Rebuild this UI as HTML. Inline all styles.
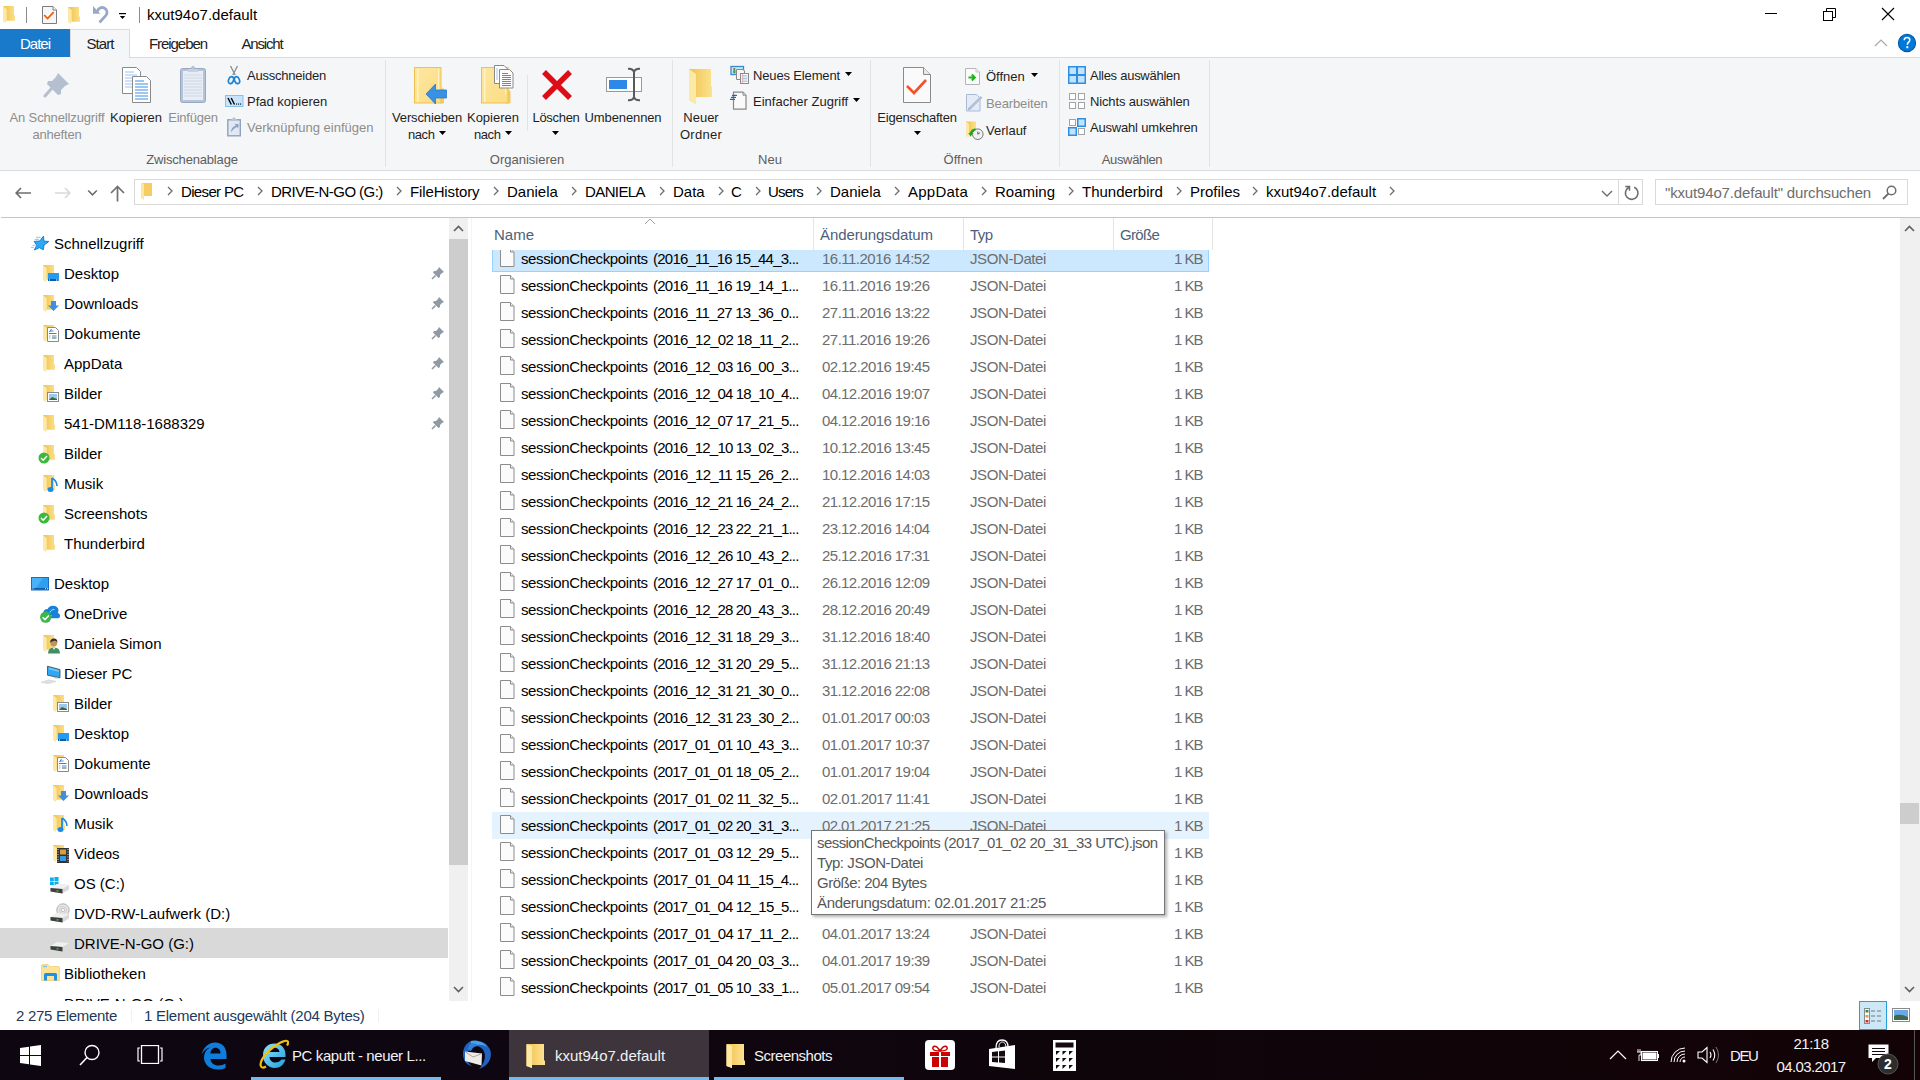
<!DOCTYPE html><html><head><meta charset="utf-8"><style>
html,body{margin:0;padding:0;width:1920px;height:1080px;overflow:hidden;background:#fff;position:relative}
.a{position:absolute;display:block}
.t{position:absolute;white-space:nowrap;font-family:"Liberation Sans",sans-serif;font-size:15px;line-height:20px;height:20px;color:#000}
.rb{font-size:13px;color:#1e1e1e}
.dis{color:#8d8d8d}
.g{font-size:13px;color:#5d5d5d}
.ad{color:#000}
.sr{color:#6d6d6d}
.nv{color:#000}
.fn{color:#000}
.dt{color:#6d6d6d}
.hd{color:#4c607a}
.tt{color:#575757}
.st{color:#1e395b}
.tb{color:#f2f2f2}
</style></head><body>
<svg width="0" height="0" style="position:absolute"><defs><linearGradient id="gfold" x1="0" x2="1"><stop offset="0" stop-color="#efc24c"/><stop offset="1" stop-color="#fbe08a"/></linearGradient></defs></svg>
<svg class="a" style="left:3px;top:6px;" width="13" height="18" viewBox="0 0 13 18"><path d="M0 0H11V9.5H12V14.8H0Z" fill="url(#gfold)"/><path d="M0 0L3.7 3.2V14.8L2.5 17L0 15Z" fill="#fde8a6"/></svg>
<div class="a" style="left:26px;top:7px;width:1px;height:16px;background:#8a8a8a"></div>
<svg class="a" style="left:42px;top:6px;" width="15" height="18" viewBox="0 0 15 18"><path d="M0.5 0.5h10.5l3.5 3.5v13.5h-14z" fill="#f5f7f9" stroke="#7d7d7d"/><path d="M11 0.5v3.5h3.5" fill="#fff" stroke="#7d7d7d"/><path d="M2.2 9 L5.5 12.5 L11.7 6.2" fill="none" stroke="#f05a00" stroke-width="1.7"/></svg>
<svg class="a" style="left:68px;top:7px;" width="13" height="18" viewBox="0 0 13 18"><path d="M0 0H11V9.5H12V14.8H0Z" fill="url(#gfold)"/><path d="M0 0L3.7 3.2V14.8L2.5 17L0 15Z" fill="#fde8a6"/></svg>
<svg class="a" style="left:92px;top:5px;" width="18" height="20" viewBox="0 0 18 20"><path d="M1 1 L1 8.8 L8.3 8.8 Z" fill="#97a9c6"/><path d="M5.5 6.5 A4.8 4.8 0 1 1 13.9 10.4 L7.5 17.5" fill="none" stroke="#97a9c6" stroke-width="2.8"/></svg>
<svg class="a" style="left:119px;top:13px;" width="7" height="7" viewBox="0 0 7 7"><rect x="0" y="0" width="7" height="1.2" fill="#000"/><path d="M0.8 3h5.4l-2.7 3z" fill="#000"/></svg>
<div class="a" style="left:139px;top:7px;width:1px;height:16px;background:#8a8a8a"></div>
<div class="t " style="left:147px;top:5px;letter-spacing:normal;color:#000">kxut94o7.default</div>
<div class="a" style="left:1765px;top:13px;width:12px;height:1px;background:#000"></div>
<svg class="a" style="left:1822px;top:8px;" width="14" height="14" viewBox="0 0 14 14"><rect x="1.5" y="3.5" width="9" height="9" fill="none" stroke="#000"/><path d="M4.5 3.5v-3h9v9h-3" fill="none" stroke="#000"/></svg>
<svg class="a" style="left:1881px;top:7px;" width="14" height="14" viewBox="0 0 14 14"><path d="M1 1L13 13M13 1L1 13" stroke="#000" stroke-width="1.1"/></svg>
<div class="a" style="left:0px;top:29px;width:70px;height:28px;background:#1979ca"></div>
<div class="t " style="left:0px;top:34px;width:70px;text-align:center;letter-spacing:-1.006px;color:#fff">Datei</div>
<div class="a" style="left:130px;top:57px;width:1790px;height:1px;background:#dadbdc"></div>
<div class="a" style="left:70px;top:29px;width:60px;height:29px;background:#f5f6f7;border:1px solid #dadbdc;border-bottom:none;box-sizing:border-box"></div>
<div class="t " style="left:70px;top:34px;width:60px;text-align:center;letter-spacing:-0.938px;color:#222">Start</div>
<div class="t " style="left:128px;top:34px;width:100px;text-align:center;letter-spacing:-1.061px;color:#222">Freigeben</div>
<div class="t " style="left:212px;top:34px;width:100px;text-align:center;letter-spacing:-1.172px;color:#222">Ansicht</div>
<svg class="a" style="left:1874px;top:39px;" width="14" height="9" viewBox="0 0 14 9"><path d="M1 7L7 1L13 7" fill="none" stroke="#a8a8a8" stroke-width="1.2"/></svg>
<svg class="a" style="left:1897px;top:33px;" width="20" height="20" viewBox="0 0 20 20"><circle cx="10" cy="10" r="8.6" fill="#0078d7" stroke="#005aa8" stroke-width="1.1"/><path d="M7.2 7.3 C7.2 5.4 8.4 4.5 10 4.5 C11.7 4.5 12.8 5.6 12.8 7 C12.8 9 10.3 9.3 10.3 11.8" fill="none" stroke="#fff" stroke-width="1.5"/><rect x="9.3" y="13.2" width="2" height="2" fill="#fff"/></svg>
<div class="a" style="left:0px;top:58px;width:1920px;height:112px;background:#f5f6f7"></div>
<div class="a" style="left:0px;top:170px;width:1920px;height:1px;background:#dadbdc"></div>
<div class="a" style="left:385px;top:60px;width:1px;height:107px;background:#e2e3e4"></div>
<div class="a" style="left:672px;top:60px;width:1px;height:107px;background:#e2e3e4"></div>
<div class="a" style="left:870px;top:60px;width:1px;height:107px;background:#e2e3e4"></div>
<div class="a" style="left:1059px;top:60px;width:1px;height:107px;background:#e2e3e4"></div>
<div class="a" style="left:1209px;top:60px;width:1px;height:107px;background:#e2e3e4"></div>
<div class="a" style="left:527px;top:75px;width:1px;height:56px;background:#e2e3e4"></div>
<div class="t g" style="left:112px;top:150px;width:160px;text-align:center;letter-spacing:-0.175px;">Zwischenablage</div>
<div class="t g" style="left:447px;top:150px;width:160px;text-align:center;letter-spacing:normal;">Organisieren</div>
<div class="t g" style="left:730px;top:150px;width:80px;text-align:center;letter-spacing:normal;">Neu</div>
<div class="t g" style="left:913px;top:150px;width:100px;text-align:center;letter-spacing:normal;">Öffnen</div>
<div class="t g" style="left:1072px;top:150px;width:120px;text-align:center;letter-spacing:-0.345px;">Auswählen</div>
<svg class="a" style="left:43px;top:71px;" width="28" height="28" viewBox="0 0 28 28"><path d="M15 2 L26 13 L22 15 L18 19 L18 23 L15 24 L4 13 L5 10 L9 10 L13 6 Z" fill="#b4c0d0"/><path d="M9 17 L2 25" stroke="#b4c0d0" stroke-width="3" stroke-linecap="round"/></svg>
<div class="t rb dis" style="left:-3px;top:108px;width:120px;text-align:center;letter-spacing:-0.137px;">An Schnellzugriff</div>
<div class="t rb dis" style="left:-3px;top:125px;width:120px;text-align:center;letter-spacing:-0.201px;">anheften</div>
<svg class="a" style="left:121px;top:66px;" width="32" height="38" viewBox="0 0 32 38"><path d="M1.5 1.5h14l4 4v22h-18z" fill="#fff" stroke="#8a8a8a"/><g stroke="#9cc3f0" stroke-width="1"><path d="M4 6h9M4 9h12M4 12h12M4 15h12M4 18h12M4 21h12"/></g><path d="M11.5 10.5h14l4 4v22h-18z" fill="#fff" stroke="#8a8a8a"/><g stroke="#3d8fe8" stroke-width="1.2"><path d="M14 15h9M14 18h13M14 21h13M14 24h13M14 27h13M14 30h13M14 33h13"/></g></svg>
<div class="t rb" style="left:96px;top:108px;width:80px;text-align:center;letter-spacing:normal;">Kopieren</div>
<svg class="a" style="left:179px;top:65px;" width="28" height="39" viewBox="0 0 28 39"><rect x="1.5" y="3.5" width="25" height="34" rx="2" fill="#b6c2d6" stroke="#98a9c4"/><rect x="4" y="6" width="20" height="29" fill="#e9eef6"/><g stroke="#ccd6e4"><path d="M5 10h18M5 13h18M5 16h18M5 19h18M5 22h18M5 25h18M5 28h18M5 31h18"/></g><path d="M9 4h10v3h-10z" fill="#c7d1e0"/><circle cx="14" cy="2.5" r="1.8" fill="#b6c2d6"/></svg>
<div class="t rb dis" style="left:158px;top:108px;width:70px;text-align:center;letter-spacing:-0.229px;">Einfügen</div>
<svg class="a" style="left:226px;top:65px;" width="16" height="20" viewBox="0 0 16 20"><path d="M4.5 1 L9.2 10 M11.5 1 L6.8 10" stroke="#8a8a8a" stroke-width="1.3"/><ellipse cx="5" cy="15.2" rx="2.4" ry="3.6" transform="rotate(22 5 15.2)" fill="none" stroke="#1a84d8" stroke-width="1.7"/><ellipse cx="11" cy="15.2" rx="2.4" ry="3.6" transform="rotate(-22 11 15.2)" fill="none" stroke="#1a84d8" stroke-width="1.7"/></svg>
<div class="t rb" style="left:247px;top:66px;letter-spacing:-0.223px;">Ausschneiden</div>
<svg class="a" style="left:225px;top:95px;" width="19" height="13" viewBox="0 0 19 13"><rect x="0.5" y="0.5" width="17.5" height="11" fill="#c8e4fa" stroke="#86c0ec"/><path d="M3 3 L6.3 9.5 M6.2 3 L9.5 9.5" stroke="#000" stroke-width="1.4"/><rect x="11" y="8.5" width="1.1" height="1.1" fill="#000"/><rect x="13" y="8.5" width="1.1" height="1.1" fill="#000"/><rect x="15" y="8.5" width="1.1" height="1.1" fill="#000"/></svg>
<div class="t rb" style="left:247px;top:92px;letter-spacing:normal;">Pfad kopieren</div>
<svg class="a" style="left:227px;top:116px;" width="15" height="21" viewBox="0 0 15 21"><rect x="0.8" y="3.8" width="12.5" height="16" fill="#e1e8f2" stroke="#8fa2c0" stroke-width="1.4"/><path d="M3.5 4.5 L7 1 L10.5 4.5 Z" fill="#b7c4d8"/><path d="M4 16.5 Q4 11 9 9.6 L7.6 7.8 L11.8 8.2 L11 12.4 L10 10.9 Q6.5 12 4 16.5 Z" fill="#8ba1c2"/></svg>
<div class="t rb dis" style="left:247px;top:118px;letter-spacing:normal;">Verknüpfung einfügen</div>
<svg class="a" style="left:414px;top:67px;" width="31" height="37" viewBox="0 0 31 37"><defs><linearGradient id="fb414" x1="0" y1="0" x2="1" y2="1"><stop offset="0" stop-color="#fde7a0"/><stop offset="1" stop-color="#fbdc84"/></linearGradient></defs><rect x="27" y="22" width="2.5" height="14" fill="#f6d264" stroke="#eec24c" stroke-width="0.8"/><rect x="0.5" y="0.5" width="26.5" height="35.5" fill="url(#fb414)" stroke="#eec24c"/><rect x="3" y="2" width="1.5" height="33" fill="#fff2c4"/><rect x="24" y="2" width="1" height="26" fill="#fff2c4"/></svg>
<svg class="a" style="left:425px;top:83px;" width="22" height="22" viewBox="0 0 22 22"><path d="M1 11 L10.5 1 V7 H21.5 V15 H10.5 V21 Z" fill="#3a90e2" stroke="#2a78cc" stroke-width="0.8"/></svg>
<div class="t rb" style="left:382px;top:108px;width:90px;text-align:center;letter-spacing:-0.142px;">Verschieben</div>
<div class="t rb" style="left:408px;top:125px;letter-spacing:-0.426px;">nach</div>
<svg class="a" style="left:439px;top:131px;" width="7" height="4" viewBox="0 0 7 4"><path d="M0 0h7l-3.5 4z" fill="#000"/></svg>
<svg class="a" style="left:481px;top:67px;" width="31" height="37" viewBox="0 0 31 37"><defs><linearGradient id="fb481" x1="0" y1="0" x2="1" y2="1"><stop offset="0" stop-color="#fde7a0"/><stop offset="1" stop-color="#fbdc84"/></linearGradient></defs><path d="M24.5 36 V24.5 Q26.8 21 29 24.5 V36 Z" fill="#f6d264" stroke="#eec24c" stroke-width="0.8"/><rect x="0.5" y="0.5" width="26.5" height="35.5" fill="url(#fb481)" stroke="#eec24c"/><rect x="3" y="2" width="1.5" height="33" fill="#fff2c4"/><rect x="24" y="2" width="1" height="26" fill="#fff2c4"/></svg>
<svg class="a" style="left:493px;top:64px;" width="22" height="26" viewBox="0 0 22 26"><path d="M1.5 1.5h9.5l3 3v15h-12.5z" fill="#fff" stroke="#8a8a8a"/><g stroke="#9cc3f0"><path d="M3 5h2M3 7h2M3 9h2M3 11h2M3 13h2M3 15h2"/></g><path d="M6.5 5.5h10l3.5 3.5v15h-13.5z" fill="#fff" stroke="#8a8a8a"/><g stroke="#3d8fe8" stroke-width="1.1"><path d="M9 9.5h6M9 11.5h9M9 13.5h9M9 15.5h9M9 17.5h9M9 19.5h9M9 21.5h9"/></g></svg>
<div class="t rb" style="left:453px;top:108px;width:80px;text-align:center;letter-spacing:normal;">Kopieren</div>
<div class="t rb" style="left:474px;top:125px;letter-spacing:-0.426px;">nach</div>
<svg class="a" style="left:505px;top:131px;" width="7" height="4" viewBox="0 0 7 4"><path d="M0 0h7l-3.5 4z" fill="#000"/></svg>
<svg class="a" style="left:540px;top:68px;" width="34" height="34" viewBox="0 0 34 34"><path d="M4 4 L30 30 M30 4 L4 30" stroke="#dc0d17" stroke-width="5.5" stroke-linecap="butt"/></svg>
<div class="t rb" style="left:521px;top:108px;width:70px;text-align:center;letter-spacing:-0.308px;">Löschen</div>
<svg class="a" style="left:552px;top:131px;" width="7" height="4" viewBox="0 0 7 4"><path d="M0 0h7l-3.5 4z" fill="#000"/></svg>
<svg class="a" style="left:605px;top:67px;" width="38" height="35" viewBox="0 0 38 35"><rect x="1.5" y="10.5" width="35" height="14" fill="#fff" stroke="#9a9a9a"/><rect x="4" y="13" width="18" height="9" fill="#2d89e5"/><path d="M23 1.8 Q28 1.5 29 5 Q30 1.5 35 1.8 M29 5 V30 M23 33.2 Q28 33.5 29 30 Q30 33.5 35 33.2" fill="none" stroke="#5a5a5a" stroke-width="2"/></svg>
<div class="t rb" style="left:578px;top:108px;width:90px;text-align:center;letter-spacing:-0.106px;">Umbenennen</div>
<svg class="a" style="left:688px;top:68px;" width="26" height="37" viewBox="0 0 26 37"><defs><linearGradient id="nfo" x1="0" x2="1"><stop offset="0" stop-color="#f1c24e"/><stop offset="1" stop-color="#fbe28f"/></linearGradient></defs><path d="M1 1 H23 V18 L24 19 V29 H8 V36 L1 32 Z" fill="url(#nfo)"/><path d="M1 1 L8 6 V36 L1 32 Z" fill="#fde9a6"/></svg>
<div class="t rb" style="left:671px;top:108px;width:60px;text-align:center;letter-spacing:normal;">Neuer</div>
<div class="t rb" style="left:671px;top:125px;width:60px;text-align:center;letter-spacing:0.255px;">Ordner</div>
<svg class="a" style="left:730px;top:65px;" width="20" height="20" viewBox="0 0 20 20"><rect x="1" y="1.5" width="12.5" height="8" fill="#c9e6fb" stroke="#3a8ac6" stroke-width="1.3"/><circle cx="4.3" cy="4" r="1.1" fill="#8a6040"/><rect x="3.2" y="5.2" width="2.3" height="3" fill="#3a9a5a"/><path d="M6.5 4.5 h6.5 l1.5 1.5 v8.5 h-8z" fill="#f4f4f4" stroke="#8a8a8a"/><rect x="10.5" y="8.5" width="8" height="10" fill="#fff" stroke="#8a8a8a"/><path d="M11.5 10.5h6M11.5 12h6M11.5 13.5h6M11.5 15h6M11.5 16.5h6" stroke="#a9cdf0"/><path d="M12.7 9v9" stroke="#f0a8a8"/></svg>
<div class="t rb" style="left:753px;top:66px;letter-spacing:-0.145px;">Neues Element</div>
<svg class="a" style="left:845px;top:72px;" width="7" height="4" viewBox="0 0 7 4"><path d="M0 0h7l-3.5 4z" fill="#000"/></svg>
<svg class="a" style="left:729px;top:91px;" width="20" height="20" viewBox="0 0 20 20"><path d="M4.5 1.2 h9.5 l3 3 v14 h-12.5 z" fill="#fafafa" stroke="#888" stroke-width="1.2"/><path d="M14 1.2 v3 h3" fill="#eee" stroke="#888" stroke-width="1"/><path d="M3.5 4.4 h4 M2.5 6.4 h4 M1.5 8.4 h4" stroke="#1e63b8" stroke-width="1.1" stroke-linecap="round"/></svg>
<div class="t rb" style="left:753px;top:92px;letter-spacing:normal;">Einfacher Zugriff</div>
<svg class="a" style="left:853px;top:98px;" width="7" height="4" viewBox="0 0 7 4"><path d="M0 0h7l-3.5 4z" fill="#000"/></svg>
<svg class="a" style="left:902px;top:66px;" width="30" height="38" viewBox="0 0 30 38"><path d="M1.5 1.5h20l7 7v28h-27z" fill="#fafafa" stroke="#8a8a8a"/><path d="M21.5 1.5v7h7" fill="#e8e8e8" stroke="#8a8a8a"/><path d="M5 20 L12 27 L24 14" fill="none" stroke="#f0532a" stroke-width="2.6"/></svg>
<div class="t rb" style="left:867px;top:108px;width:100px;text-align:center;letter-spacing:-0.239px;">Eigenschaften</div>
<svg class="a" style="left:914px;top:131px;" width="7" height="4" viewBox="0 0 7 4"><path d="M0 0h7l-3.5 4z" fill="#000"/></svg>
<svg class="a" style="left:965px;top:68px;" width="16" height="18" viewBox="0 0 16 18"><path d="M0.5 0.5h10.5l3.5 3.5v12.5h-14z" fill="#fbfbfb" stroke="#b5b5b5"/><path d="M11 0.5v3.5h3.5" fill="#eee" stroke="#c5c5c5"/><path d="M3.5 9.5 H9.5 M6.8 6.5 L9.8 9.5 L6.8 12.5" fill="none" stroke="#1fb21f" stroke-width="2"/></svg>
<div class="t rb" style="left:986px;top:67px;letter-spacing:normal;">Öffnen</div>
<svg class="a" style="left:1031px;top:73px;" width="7" height="4" viewBox="0 0 7 4"><path d="M0 0h7l-3.5 4z" fill="#000"/></svg>
<svg class="a" style="left:966px;top:94px;" width="18" height="18" viewBox="0 0 18 18"><path d="M0.5 0.5h10l3.5 3.5v13h-13.5z" fill="#e3ebf7" stroke="#a9bad4"/><path d="M3.2 15 L15.5 2.8" stroke="#b3c1d8" stroke-width="2.6"/><path d="M2.5 16 L3.4 14" stroke="#8898b0" stroke-width="1"/></svg>
<div class="t rb dis" style="left:986px;top:94px;letter-spacing:-0.119px;">Bearbeiten</div>
<svg class="a" style="left:965px;top:121px;" width="20" height="20" viewBox="0 0 20 20"><path d="M1 0.5H11V13H1Z" fill="url(#gfold)"/><path d="M1 0.5L4 3V16.5L1 15Z" fill="#fde8a6"/><circle cx="12.8" cy="13.2" r="5.3" fill="#eef0f1" stroke="#6a6a6a" stroke-width="0.9"/><path d="M12.8 10.5 V13.2 L15 11.8" fill="none" stroke="#444" stroke-width="0.8"/><path d="M5.6 13 Q6.5 9 10.5 8.3" fill="none" stroke="#1fa51f" stroke-width="2.2"/><path d="M3.3 12 H8 L5.6 15.8 Z" fill="#1fa51f"/></svg>
<div class="t rb" style="left:986px;top:121px;letter-spacing:normal;">Verlauf</div>
<svg class="a" style="left:1067px;top:65px;" width="20" height="20" viewBox="0 0 20 20"><rect x="1" y="1" width="18" height="18" fill="#2b8fe6"/><rect x="2.5" y="2.5" width="6.5" height="6.5" fill="#c3e2fb"/><rect x="11" y="2.5" width="6.5" height="6.5" fill="#c3e2fb"/><rect x="2.5" y="11" width="6.5" height="6.5" fill="#c3e2fb"/><rect x="11" y="11" width="6.5" height="6.5" fill="#c3e2fb"/></svg>
<div class="t rb" style="left:1090px;top:66px;letter-spacing:-0.264px;">Alles auswählen</div>
<svg class="a" style="left:1068px;top:92px;" width="18" height="18" viewBox="0 0 18 18"><g fill="#fff" stroke="#a3a3a3"><rect x="1.5" y="1.5" width="6" height="6"/><rect x="10.5" y="1.5" width="6" height="6"/><rect x="1.5" y="10.5" width="6" height="6"/><rect x="10.5" y="10.5" width="6" height="6"/></g></svg>
<div class="t rb" style="left:1090px;top:92px;letter-spacing:-0.143px;">Nichts auswählen</div>
<svg class="a" style="left:1067px;top:117px;" width="20" height="20" viewBox="0 0 20 20"><g fill="#fff" stroke="#a3a3a3"><rect x="2.5" y="2.5" width="6" height="6"/><rect x="11.5" y="11.5" width="6" height="6"/></g><rect x="10" y="1" width="9" height="9" fill="#2b8fe6"/><rect x="11.5" y="2.5" width="6" height="6" fill="#c3e2fb"/><rect x="1" y="10" width="9" height="9" fill="#2b8fe6"/><rect x="2.5" y="11.5" width="6" height="6" fill="#c3e2fb"/></svg>
<div class="t rb" style="left:1090px;top:118px;letter-spacing:-0.191px;">Auswahl umkehren</div>
<svg class="a" style="left:15px;top:187px;" width="17" height="12" viewBox="0 0 17 12"><path d="M6 1 L1.2 6 L6 11 M1.2 6 H16" fill="none" stroke="#6d6d6d" stroke-width="1.7"/></svg>
<svg class="a" style="left:54px;top:187px;" width="17" height="12" viewBox="0 0 17 12"><path d="M11 1 L15.8 6 L11 11 M1 6 H15.8" fill="none" stroke="#d9d9d9" stroke-width="1.7"/></svg>
<svg class="a" style="left:87px;top:189px;" width="11" height="8" viewBox="0 0 11 8"><path d="M1.2 1.5 L5.5 5.8 L9.8 1.5" fill="none" stroke="#6d6d6d" stroke-width="1.6"/></svg>
<svg class="a" style="left:110px;top:185px;" width="16" height="17" viewBox="0 0 16 17"><path d="M1 8 L7.5 1.5 L14 8 M7.5 1.5 V16.5" fill="none" stroke="#707070" stroke-width="1.7"/></svg>
<div class="a" style="left:134px;top:179px;width:1509px;height:26px;border:1px solid #d9d9d9;box-sizing:border-box;background:#fff"></div>
<div class="a" style="left:1618px;top:180px;width:1px;height:24px;background:#d9d9d9"></div>
<svg class="a" style="left:140px;top:182px;" width="13" height="19" viewBox="0 0 13 19"><path d="M2 1 H12 V14 H3z" fill="#f5cd62"/><path d="M1 1 L4 2 V18 L1 16 Z" fill="#fde7a2"/></svg>
<svg class="a" style="left:167px;top:186px;" width="7" height="10" viewBox="0 0 7 10"><path d="M1 1 L5 5 L1 9" fill="none" stroke="#6d6d6d" stroke-width="1.3"/></svg>
<div class="t ad" style="left:181px;top:182px;letter-spacing:-0.651px;">Dieser PC</div>
<svg class="a" style="left:257px;top:186px;" width="7" height="10" viewBox="0 0 7 10"><path d="M1 1 L5 5 L1 9" fill="none" stroke="#6d6d6d" stroke-width="1.3"/></svg>
<div class="t ad" style="left:271px;top:182px;letter-spacing:-0.550px;">DRIVE-N-GO (G:)</div>
<svg class="a" style="left:396px;top:186px;" width="7" height="10" viewBox="0 0 7 10"><path d="M1 1 L5 5 L1 9" fill="none" stroke="#6d6d6d" stroke-width="1.3"/></svg>
<div class="t ad" style="left:410px;top:182px;letter-spacing:-0.131px;">FileHistory</div>
<svg class="a" style="left:493px;top:186px;" width="7" height="10" viewBox="0 0 7 10"><path d="M1 1 L5 5 L1 9" fill="none" stroke="#6d6d6d" stroke-width="1.3"/></svg>
<div class="t ad" style="left:507px;top:182px;letter-spacing:normal;">Daniela</div>
<svg class="a" style="left:571px;top:186px;" width="7" height="10" viewBox="0 0 7 10"><path d="M1 1 L5 5 L1 9" fill="none" stroke="#6d6d6d" stroke-width="1.3"/></svg>
<div class="t ad" style="left:585px;top:182px;letter-spacing:-0.600px;">DANIELA</div>
<svg class="a" style="left:659px;top:186px;" width="7" height="10" viewBox="0 0 7 10"><path d="M1 1 L5 5 L1 9" fill="none" stroke="#6d6d6d" stroke-width="1.3"/></svg>
<div class="t ad" style="left:673px;top:182px;letter-spacing:normal;">Data</div>
<svg class="a" style="left:718px;top:186px;" width="7" height="10" viewBox="0 0 7 10"><path d="M1 1 L5 5 L1 9" fill="none" stroke="#6d6d6d" stroke-width="1.3"/></svg>
<div class="t ad" style="left:731px;top:182px;letter-spacing:-1.344px;">C</div>
<svg class="a" style="left:755px;top:186px;" width="7" height="10" viewBox="0 0 7 10"><path d="M1 1 L5 5 L1 9" fill="none" stroke="#6d6d6d" stroke-width="1.3"/></svg>
<div class="t ad" style="left:768px;top:182px;letter-spacing:-0.834px;">Users</div>
<svg class="a" style="left:816px;top:186px;" width="7" height="10" viewBox="0 0 7 10"><path d="M1 1 L5 5 L1 9" fill="none" stroke="#6d6d6d" stroke-width="1.3"/></svg>
<div class="t ad" style="left:830px;top:182px;letter-spacing:normal;">Daniela</div>
<svg class="a" style="left:894px;top:186px;" width="7" height="10" viewBox="0 0 7 10"><path d="M1 1 L5 5 L1 9" fill="none" stroke="#6d6d6d" stroke-width="1.3"/></svg>
<div class="t ad" style="left:908px;top:182px;letter-spacing:0.232px;">AppData</div>
<svg class="a" style="left:981px;top:186px;" width="7" height="10" viewBox="0 0 7 10"><path d="M1 1 L5 5 L1 9" fill="none" stroke="#6d6d6d" stroke-width="1.3"/></svg>
<div class="t ad" style="left:995px;top:182px;letter-spacing:normal;">Roaming</div>
<svg class="a" style="left:1068px;top:186px;" width="7" height="10" viewBox="0 0 7 10"><path d="M1 1 L5 5 L1 9" fill="none" stroke="#6d6d6d" stroke-width="1.3"/></svg>
<div class="t ad" style="left:1082px;top:182px;letter-spacing:normal;">Thunderbird</div>
<svg class="a" style="left:1176px;top:186px;" width="7" height="10" viewBox="0 0 7 10"><path d="M1 1 L5 5 L1 9" fill="none" stroke="#6d6d6d" stroke-width="1.3"/></svg>
<div class="t ad" style="left:1190px;top:182px;letter-spacing:normal;">Profiles</div>
<svg class="a" style="left:1252px;top:186px;" width="7" height="10" viewBox="0 0 7 10"><path d="M1 1 L5 5 L1 9" fill="none" stroke="#6d6d6d" stroke-width="1.3"/></svg>
<div class="t ad" style="left:1266px;top:182px;letter-spacing:normal;">kxut94o7.default</div>
<svg class="a" style="left:1389px;top:186px;" width="7" height="10" viewBox="0 0 7 10"><path d="M1 1 L5 5 L1 9" fill="none" stroke="#6d6d6d" stroke-width="1.3"/></svg>
<svg class="a" style="left:1601px;top:190px;" width="12" height="8" viewBox="0 0 12 8"><path d="M1 1 L6 6 L11 1" fill="none" stroke="#6d6d6d" stroke-width="1.4"/></svg>
<svg class="a" style="left:1623px;top:185px;" width="17" height="16" viewBox="0 0 17 16"><path d="M5.6 2.6 A6.3 6.3 0 1 0 11.2 2.3" fill="none" stroke="#6d6d6d" stroke-width="1.6"/><path d="M2.2 1.4 H6.5 V5.8" fill="none" stroke="#6d6d6d" stroke-width="1.5"/><path d="M6.3 1.6 L3.8 4.2" stroke="#6d6d6d" stroke-width="1.4"/></svg>
<div class="a" style="left:1655px;top:179px;width:253px;height:26px;border:1px solid #d9d9d9;box-sizing:border-box;background:#fff"></div>
<div class="t sr" style="left:1665px;top:183px;letter-spacing:-0.160px;">"kxut94o7.default" durchsuchen</div>
<svg class="a" style="left:1882px;top:185px;" width="15" height="15" viewBox="0 0 15 15"><circle cx="9.5" cy="5.5" r="4.3" fill="none" stroke="#6d6d6d" stroke-width="1.5"/><path d="M6.5 8.5 L1 14" stroke="#6d6d6d" stroke-width="1.8"/></svg>
<div class="a" style="left:1px;top:217px;width:1919px;height:1px;background:#c5c5c5"></div>
<svg class="a" style="left:28px;top:232px;" width="24" height="22" viewBox="0 0 24 22"><path d="M15.5 4.1 L15.9 9.1 L20.8 9.5 L16.1 13.1 L15.3 17.8 L11.4 15.7 L6.3 18 L8.8 13.3 L6.1 9.4 L11.8 9 Z" fill="#2ba9f6" stroke="#0b78cf" stroke-width="0.9" stroke-linejoin="round"/><path d="M8 5.3 H12.7 M6.8 7.4 H11 M4.5 13.4 H7.5 M3 15.4 H5.8" stroke="#74c2ef" stroke-width="0.9"/></svg>
<div class="t nv" style="left:54px;top:234px;letter-spacing:normal;">Schnellzugriff</div>
<svg class="a" style="left:43px;top:265px;" width="13" height="18" viewBox="0 0 13 18"><path d="M0 0H11V9.5H12V14.8H0Z" fill="url(#gfold)"/><path d="M0 0L3.7 3.2V14.8L2.5 17L0 15Z" fill="#fde8a6"/></svg>
<svg class="a" style="left:48px;top:273px;" width="11" height="8" viewBox="0 0 11 8"><rect x="0" y="0" width="11" height="8" fill="#259af0"/><rect x="0" y="6" width="11" height="2" fill="#0b5ca8"/><rect x="1" y="6.5" width="1" height="1" fill="#fff"/><rect x="8" y="6.5" width="1" height="1" fill="#fff"/><rect x="9.6" y="6.5" width="1" height="1" fill="#fff"/></svg>
<div class="t nv" style="left:64px;top:264px;letter-spacing:normal;">Desktop</div>
<svg class="a" style="left:431px;top:266px;" width="14" height="14" viewBox="0 0 14 14"><path d="M8 1 L13 6 L11 7 L9 9 L9 11 L7.5 12 L2 6.5 L3 5 L5 5 L7 3 Z" fill="#8f9aa5"/><path d="M4.5 9.5 L1 13" stroke="#8f9aa5" stroke-width="1.6"/></svg>
<svg class="a" style="left:43px;top:295px;" width="13" height="18" viewBox="0 0 13 18"><path d="M0 0H11V9.5H12V14.8H0Z" fill="url(#gfold)"/><path d="M0 0L3.7 3.2V14.8L2.5 17L0 15Z" fill="#fde8a6"/></svg>
<svg class="a" style="left:48px;top:301px;" width="11" height="11" viewBox="0 0 11 11"><path d="M3 0h5v4.5h3l-5.5 5.5L0 4.5h3z" fill="#3f8fe0"/></svg>
<div class="t nv" style="left:64px;top:294px;letter-spacing:normal;">Downloads</div>
<svg class="a" style="left:431px;top:296px;" width="14" height="14" viewBox="0 0 14 14"><path d="M8 1 L13 6 L11 7 L9 9 L9 11 L7.5 12 L2 6.5 L3 5 L5 5 L7 3 Z" fill="#8f9aa5"/><path d="M4.5 9.5 L1 13" stroke="#8f9aa5" stroke-width="1.6"/></svg>
<svg class="a" style="left:43px;top:325px;" width="13" height="18" viewBox="0 0 13 18"><path d="M0 0H11V9.5H12V14.8H0Z" fill="url(#gfold)"/><path d="M0 0L3.7 3.2V14.8L2.5 17L0 15Z" fill="#fde8a6"/></svg>
<svg class="a" style="left:47px;top:327px;" width="12" height="15" viewBox="0 0 12 15"><path d="M0.5 0.5h8l3 3v11h-11z" fill="#fff" stroke="#8a8a8a"/><path d="M2.5 5 L4.5 2 M3 4 h3.5" stroke="#2a7ad0" stroke-width="0.9"/><path d="M2 6.5h7.5" stroke="#2a86e0"/><path d="M2 9h1.5M2 11h1.5" stroke="#aaa"/><path d="M5 9h4.5" stroke="#4a8ae0"/><path d="M5 11h4.5" stroke="#3a6a4a"/></svg>
<div class="t nv" style="left:64px;top:324px;letter-spacing:normal;">Dokumente</div>
<svg class="a" style="left:431px;top:326px;" width="14" height="14" viewBox="0 0 14 14"><path d="M8 1 L13 6 L11 7 L9 9 L9 11 L7.5 12 L2 6.5 L3 5 L5 5 L7 3 Z" fill="#8f9aa5"/><path d="M4.5 9.5 L1 13" stroke="#8f9aa5" stroke-width="1.6"/></svg>
<svg class="a" style="left:43px;top:355px;" width="13" height="18" viewBox="0 0 13 18"><path d="M0 0H11V9.5H12V14.8H0Z" fill="url(#gfold)"/><path d="M0 0L3.7 3.2V14.8L2.5 17L0 15Z" fill="#fde8a6"/></svg>
<div class="t nv" style="left:64px;top:354px;letter-spacing:normal;">AppData</div>
<svg class="a" style="left:431px;top:356px;" width="14" height="14" viewBox="0 0 14 14"><path d="M8 1 L13 6 L11 7 L9 9 L9 11 L7.5 12 L2 6.5 L3 5 L5 5 L7 3 Z" fill="#8f9aa5"/><path d="M4.5 9.5 L1 13" stroke="#8f9aa5" stroke-width="1.6"/></svg>
<svg class="a" style="left:43px;top:385px;" width="13" height="18" viewBox="0 0 13 18"><path d="M0 0H11V9.5H12V14.8H0Z" fill="url(#gfold)"/><path d="M0 0L3.7 3.2V14.8L2.5 17L0 15Z" fill="#fde8a6"/></svg>
<svg class="a" style="left:47px;top:392px;" width="12" height="10" viewBox="0 0 12 10"><rect x="0.5" y="0.5" width="11" height="9" fill="#fff" stroke="#8a8a8a"/><rect x="2" y="2" width="8" height="6" fill="#9cc7ee"/><path d="M2 8 L5 5 L10 7 V8z" fill="#3a6a3a"/></svg>
<div class="t nv" style="left:64px;top:384px;letter-spacing:normal;">Bilder</div>
<svg class="a" style="left:431px;top:386px;" width="14" height="14" viewBox="0 0 14 14"><path d="M8 1 L13 6 L11 7 L9 9 L9 11 L7.5 12 L2 6.5 L3 5 L5 5 L7 3 Z" fill="#8f9aa5"/><path d="M4.5 9.5 L1 13" stroke="#8f9aa5" stroke-width="1.6"/></svg>
<svg class="a" style="left:43px;top:415px;" width="13" height="18" viewBox="0 0 13 18"><path d="M0 0H11V9.5H12V14.8H0Z" fill="url(#gfold)"/><path d="M0 0L3.7 3.2V14.8L2.5 17L0 15Z" fill="#fde8a6"/></svg>
<div class="t nv" style="left:64px;top:414px;letter-spacing:normal;">541-DM118-1688329</div>
<svg class="a" style="left:431px;top:416px;" width="14" height="14" viewBox="0 0 14 14"><path d="M8 1 L13 6 L11 7 L9 9 L9 11 L7.5 12 L2 6.5 L3 5 L5 5 L7 3 Z" fill="#8f9aa5"/><path d="M4.5 9.5 L1 13" stroke="#8f9aa5" stroke-width="1.6"/></svg>
<svg class="a" style="left:43px;top:445px;" width="13" height="18" viewBox="0 0 13 18"><path d="M0 0H11V9.5H12V14.8H0Z" fill="url(#gfold)"/><path d="M0 0L3.7 3.2V14.8L2.5 17L0 15Z" fill="#fde8a6"/></svg>
<svg class="a" style="left:38px;top:452px;" width="12" height="12" viewBox="0 0 12 12"><circle cx="6" cy="6" r="5.5" fill="#3cb93c"/><path d="M3 6 L5.2 8.2 L9 4" fill="none" stroke="#fff" stroke-width="1.4"/></svg>
<div class="t nv" style="left:64px;top:444px;letter-spacing:normal;">Bilder</div>
<svg class="a" style="left:43px;top:475px;" width="13" height="18" viewBox="0 0 13 18"><path d="M0 0H11V9.5H12V14.8H0Z" fill="url(#gfold)"/><path d="M0 0L3.7 3.2V14.8L2.5 17L0 15Z" fill="#fde8a6"/></svg>
<svg class="a" style="left:47px;top:477px;" width="12" height="16" viewBox="0 0 12 16"><path d="M5 1 V12" stroke="#1e8ae6" stroke-width="1.8"/><path d="M5 1 Q10 4 10 9" fill="none" stroke="#1e8ae6" stroke-width="1.6"/><ellipse cx="3.5" cy="12.5" rx="3" ry="2.5" fill="#1e8ae6"/></svg>
<div class="t nv" style="left:64px;top:474px;letter-spacing:normal;">Musik</div>
<svg class="a" style="left:43px;top:505px;" width="13" height="18" viewBox="0 0 13 18"><path d="M0 0H11V9.5H12V14.8H0Z" fill="url(#gfold)"/><path d="M0 0L3.7 3.2V14.8L2.5 17L0 15Z" fill="#fde8a6"/></svg>
<svg class="a" style="left:38px;top:512px;" width="12" height="12" viewBox="0 0 12 12"><circle cx="6" cy="6" r="5.5" fill="#3cb93c"/><path d="M3 6 L5.2 8.2 L9 4" fill="none" stroke="#fff" stroke-width="1.4"/></svg>
<div class="t nv" style="left:64px;top:504px;letter-spacing:normal;">Screenshots</div>
<svg class="a" style="left:43px;top:535px;" width="13" height="18" viewBox="0 0 13 18"><path d="M0 0H11V9.5H12V14.8H0Z" fill="url(#gfold)"/><path d="M0 0L3.7 3.2V14.8L2.5 17L0 15Z" fill="#fde8a6"/></svg>
<div class="t nv" style="left:64px;top:534px;letter-spacing:normal;">Thunderbird</div>
<svg class="a" style="left:31px;top:577px;" width="18" height="14" viewBox="0 0 18 14"><rect x="0.5" y="0.5" width="17" height="12.5" fill="#2f9ff0" stroke="#1a6fc0"/><path d="M1 1 H12 L4 12.5 H1 Z" fill="#49b2f8"/><rect x="1" y="11" width="16" height="1.5" fill="#0d5aa5"/><rect x="1.5" y="11.3" width="1" height="0.9" fill="#fff"/><rect x="14" y="11.3" width="1" height="0.9" fill="#fff"/><rect x="16" y="11.3" width="1" height="0.9" fill="#fff"/></svg>
<div class="t nv" style="left:54px;top:574px;letter-spacing:normal;">Desktop</div>
<svg class="a" style="left:39px;top:604px;" width="22" height="20" viewBox="0 0 22 20"><ellipse cx="14" cy="6.5" rx="5.5" ry="4.8" fill="#1683d8"/><ellipse cx="8.5" cy="8.5" rx="4" ry="3.5" fill="#1683d8"/><path d="M12 13.5 C12 10 14.5 8.5 17 8.5 C19.5 8.5 21 10 21 12 C21 13.5 20 14.2 19 14.2 H12 Z" fill="#1683d8"/><path d="M11 8.5 C11.5 6.5 13.5 5.2 15.5 5.5" fill="none" stroke="#fff" stroke-width="0.7"/><circle cx="6.7" cy="13.2" r="5.6" fill="#3cb54a"/><path d="M3.6 13.3 L5.9 15.6 L9.9 11.4" fill="none" stroke="#fff" stroke-width="1.5"/></svg>
<div class="t nv" style="left:64px;top:604px;letter-spacing:normal;">OneDrive</div>
<svg class="a" style="left:43px;top:635px;" width="13" height="18" viewBox="0 0 13 18"><path d="M0 0H11V9.5H12V14.8H0Z" fill="url(#gfold)"/><path d="M0 0L3.7 3.2V14.8L2.5 17L0 15Z" fill="#fde8a6"/></svg>
<svg class="a" style="left:47px;top:638px;" width="14" height="16" viewBox="0 0 14 16"><path d="M1 15.5 Q1 9.5 7 9.5 Q13 9.5 13 15.5 Z" fill="#3f8f62"/><path d="M5.5 9.6 L7 12 L8.5 9.6 Z" fill="#e0f0f0"/><circle cx="6.8" cy="5" r="3.4" fill="#c2925f"/><path d="M3.3 4.8 C3 1.5 5 0.5 7 0.5 C9.5 0.5 10.8 2.5 10.3 4.5 C9.5 3 8 2.5 6.5 3 C5 3.3 4 4 3.3 4.8 Z" fill="#2f2f2f"/></svg>
<div class="t nv" style="left:64px;top:634px;letter-spacing:normal;">Daniela Simon</div>
<svg class="a" style="left:40px;top:664px;" width="22" height="20" viewBox="0 0 22 20"><path d="M7.5 2.2 L20 5.6 V13.8 L7.5 11.2 Z" fill="#2ea8f5" stroke="#444" stroke-width="0.8"/><path d="M9 3.5 L19 6.3 V8 L9 5.5 Z" fill="#6cc6fa"/><path d="M13.5 13 L15 14.5 H19 L17.5 13.5 Z" fill="#b8bcc0"/><path d="M1 18.3 L8.5 15.8 L16 17.3 L8.5 19.8 Z" fill="#dde1e6" stroke="#c8ccd2" stroke-width="0.5"/></svg>
<div class="t nv" style="left:64px;top:664px;letter-spacing:normal;">Dieser PC</div>
<svg class="a" style="left:53px;top:695px;" width="13" height="18" viewBox="0 0 13 18"><path d="M0 0H11V9.5H12V14.8H0Z" fill="url(#gfold)"/><path d="M0 0L3.7 3.2V14.8L2.5 17L0 15Z" fill="#fde8a6"/></svg>
<svg class="a" style="left:57px;top:702px;" width="12" height="10" viewBox="0 0 12 10"><rect x="0.5" y="0.5" width="11" height="9" fill="#fff" stroke="#8a8a8a"/><rect x="2" y="2" width="8" height="6" fill="#9cc7ee"/><path d="M2 8 L5 5 L10 7 V8z" fill="#3a6a3a"/></svg>
<div class="t nv" style="left:74px;top:694px;letter-spacing:normal;">Bilder</div>
<svg class="a" style="left:53px;top:725px;" width="13" height="18" viewBox="0 0 13 18"><path d="M0 0H11V9.5H12V14.8H0Z" fill="url(#gfold)"/><path d="M0 0L3.7 3.2V14.8L2.5 17L0 15Z" fill="#fde8a6"/></svg>
<svg class="a" style="left:58px;top:733px;" width="11" height="8" viewBox="0 0 11 8"><rect x="0" y="0" width="11" height="8" fill="#259af0"/><rect x="0" y="6" width="11" height="2" fill="#0b5ca8"/><rect x="1" y="6.5" width="1" height="1" fill="#fff"/><rect x="8" y="6.5" width="1" height="1" fill="#fff"/><rect x="9.6" y="6.5" width="1" height="1" fill="#fff"/></svg>
<div class="t nv" style="left:74px;top:724px;letter-spacing:normal;">Desktop</div>
<svg class="a" style="left:53px;top:755px;" width="13" height="18" viewBox="0 0 13 18"><path d="M0 0H11V9.5H12V14.8H0Z" fill="url(#gfold)"/><path d="M0 0L3.7 3.2V14.8L2.5 17L0 15Z" fill="#fde8a6"/></svg>
<svg class="a" style="left:57px;top:757px;" width="12" height="15" viewBox="0 0 12 15"><path d="M0.5 0.5h8l3 3v11h-11z" fill="#fff" stroke="#8a8a8a"/><path d="M2.5 5 L4.5 2 M3 4 h3.5" stroke="#2a7ad0" stroke-width="0.9"/><path d="M2 6.5h7.5" stroke="#2a86e0"/><path d="M2 9h1.5M2 11h1.5" stroke="#aaa"/><path d="M5 9h4.5" stroke="#4a8ae0"/><path d="M5 11h4.5" stroke="#3a6a4a"/></svg>
<div class="t nv" style="left:74px;top:754px;letter-spacing:normal;">Dokumente</div>
<svg class="a" style="left:53px;top:785px;" width="13" height="18" viewBox="0 0 13 18"><path d="M0 0H11V9.5H12V14.8H0Z" fill="url(#gfold)"/><path d="M0 0L3.7 3.2V14.8L2.5 17L0 15Z" fill="#fde8a6"/></svg>
<svg class="a" style="left:58px;top:791px;" width="11" height="11" viewBox="0 0 11 11"><path d="M3 0h5v4.5h3l-5.5 5.5L0 4.5h3z" fill="#3f8fe0"/></svg>
<div class="t nv" style="left:74px;top:784px;letter-spacing:normal;">Downloads</div>
<svg class="a" style="left:53px;top:815px;" width="13" height="18" viewBox="0 0 13 18"><path d="M0 0H11V9.5H12V14.8H0Z" fill="url(#gfold)"/><path d="M0 0L3.7 3.2V14.8L2.5 17L0 15Z" fill="#fde8a6"/></svg>
<svg class="a" style="left:57px;top:817px;" width="12" height="16" viewBox="0 0 12 16"><path d="M5 1 V12" stroke="#1e8ae6" stroke-width="1.8"/><path d="M5 1 Q10 4 10 9" fill="none" stroke="#1e8ae6" stroke-width="1.6"/><ellipse cx="3.5" cy="12.5" rx="3" ry="2.5" fill="#1e8ae6"/></svg>
<div class="t nv" style="left:74px;top:814px;letter-spacing:normal;">Musik</div>
<svg class="a" style="left:53px;top:845px;" width="13" height="18" viewBox="0 0 13 18"><path d="M0 0H11V9.5H12V14.8H0Z" fill="url(#gfold)"/><path d="M0 0L3.7 3.2V14.8L2.5 17L0 15Z" fill="#fde8a6"/></svg>
<svg class="a" style="left:57px;top:848px;" width="12" height="15" viewBox="0 0 12 15"><rect x="0" y="0" width="12" height="15" fill="#333"/><rect x="3" y="1.5" width="6" height="5" fill="#d9a040"/><rect x="3" y="8" width="6" height="5" fill="#3a9ae0"/><path d="M1 1v13M11 1v13" stroke="#ddd" stroke-dasharray="1 1.5"/></svg>
<div class="t nv" style="left:74px;top:844px;letter-spacing:normal;">Videos</div>
<svg class="a" style="left:50px;top:877px;" width="9" height="9" viewBox="0 0 9 9"><g fill="#0aaeef"><rect x="0" y="0.5" width="3.8" height="3.5"/><rect x="4.5" y="0" width="4" height="4"/><rect x="0" y="4.6" width="3.8" height="3.5"/><rect x="4.5" y="4.6" width="4" height="4"/></g></svg>
<svg class="a" style="left:50px;top:883px;" width="20" height="11" viewBox="0 0 20 11"><path d="M0.5 5 L7 1 L19 2 L19 6.5 L12.5 10.5 L0.5 8.5 Z" fill="#d9d9d9"/><path d="M0.5 5 L7 1 L19 2 L12.5 6 Z" fill="#f0f0f0"/><path d="M0.5 5 L12.5 6 V10.5 L0.5 8.5 Z" fill="#3f3f3f"/><rect x="6.5" y="7.3" width="2" height="1.2" fill="#3ed23e"/></svg>
<div class="t nv" style="left:74px;top:874px;letter-spacing:normal;">OS (C:)</div>
<svg class="a" style="left:56px;top:903px;" width="14" height="14" viewBox="0 0 14 14"><circle cx="7" cy="7" r="6.2" fill="#e6e6e6" stroke="#a8a8a8" stroke-width="0.9"/><circle cx="7" cy="7" r="3.5" fill="none" stroke="#cfcfcf"/><rect x="5.8" y="5.8" width="2.4" height="2.4" fill="#fff" stroke="#999" stroke-width="0.5"/></svg>
<svg class="a" style="left:50px;top:912px;" width="20" height="11" viewBox="0 0 20 11"><path d="M0.5 5 L7 1 L19 2 L19 6.5 L12.5 10.5 L0.5 8.5 Z" fill="#d9d9d9"/><path d="M0.5 5 L7 1 L19 2 L12.5 6 Z" fill="#f0f0f0"/><path d="M0.5 5 L12.5 6 V10.5 L0.5 8.5 Z" fill="#3f3f3f"/><rect x="6.5" y="7.3" width="2" height="1.2" fill="#3ed23e"/></svg>
<div class="t nv" style="left:74px;top:904px;letter-spacing:normal;">DVD-RW-Laufwerk (D:)</div>
<div class="a" style="left:0px;top:928px;width:448px;height:30px;background:#d9d9d9"></div>
<svg class="a" style="left:50px;top:941px;" width="20" height="11" viewBox="0 0 20 11"><path d="M0.5 5 L7 1 L19 2 L19 6.5 L12.5 10.5 L0.5 8.5 Z" fill="#d9d9d9"/><path d="M0.5 5 L7 1 L19 2 L12.5 6 Z" fill="#f0f0f0"/><path d="M0.5 5 L12.5 6 V10.5 L0.5 8.5 Z" fill="#3f3f3f"/><rect x="6.5" y="7.3" width="2" height="1.2" fill="#3ed23e"/></svg>
<div class="t nv" style="left:74px;top:934px;letter-spacing:normal;">DRIVE-N-GO (G:)</div>
<svg class="a" style="left:41px;top:964px;" width="19" height="17" viewBox="0 0 19 17"><path d="M0.5 2 Q0.5 0.5 2 0.5 H7 L9 2.5 H17 Q18.5 2.5 18.5 4 V16.5 H0.5 Z" fill="#fbe39a" stroke="#f1cf6e" stroke-width="0.8"/><rect x="2" y="1.8" width="4" height="1.4" fill="#7fc6f2"/><path d="M3 16.5 V10.5 Q3 9 4.5 9 H14.5 Q16 9 16 10.5 V16.5 H13 V12 H6 V16.5 Z" fill="#1e90e6"/></svg>
<div class="t nv" style="left:64px;top:964px;letter-spacing:normal;">Bibliotheken</div>
<div class="t nv" style="left:64px;top:994px;letter-spacing:normal;">DRIVE-N-GO (G:)</div>
<div class="a" style="left:449px;top:218px;width:19px;height:785px;background:#f0f0f0"></div>
<div class="a" style="left:449px;top:239px;width:19px;height:626px;background:#cdcdcd"></div>
<svg class="a" style="left:453px;top:225px;" width="11" height="7" viewBox="0 0 11 7"><path d="M1 6 L5.5 1.5 L10 6" fill="none" stroke="#606060" stroke-width="1.6"/></svg>
<svg class="a" style="left:453px;top:986px;" width="11" height="7" viewBox="0 0 11 7"><path d="M1 1 L5.5 5.5 L10 1" fill="none" stroke="#606060" stroke-width="1.6"/></svg>
<div class="a" style="left:471px;top:218px;width:1px;height:785px;background:#f4f4f4"></div>
<div class="a" style="left:492px;top:245px;width:717px;height:27px;background:#cce8ff;border:1px solid #99d1ff;box-sizing:border-box"></div>
<svg class="a" style="left:500px;top:248px;" width="15" height="19" viewBox="0 0 15 19"><path d="M0.5 0.5h10l3.5 3.5v14.5h-13.5z" fill="#fbfbfb" stroke="#8c8c8c"/><path d="M10.5 0.5v3.5h3.5" fill="#f0f0f0" stroke="#8c8c8c"/></svg>
<div class="t fn" style="left:521px;top:249px;letter-spacing:-0.378px;">sessionCheckpoints</div>
<div class="t fn" style="left:653px;top:249px;letter-spacing:-0.767px;">(2016_11_16 15_44_3...</div>
<div class="t dt" style="left:822px;top:249px;letter-spacing:-0.511px;">16.11.2016 14:52</div>
<div class="t dt" style="left:970px;top:249px;letter-spacing:-0.403px;">JSON-Datei</div>
<div class="t dt" style="left:1174px;top:249px;letter-spacing:-1.008px;">1 KB</div>
<svg class="a" style="left:500px;top:275px;" width="15" height="19" viewBox="0 0 15 19"><path d="M0.5 0.5h10l3.5 3.5v14.5h-13.5z" fill="#fbfbfb" stroke="#8c8c8c"/><path d="M10.5 0.5v3.5h3.5" fill="#f0f0f0" stroke="#8c8c8c"/></svg>
<div class="t fn" style="left:521px;top:276px;letter-spacing:-0.378px;">sessionCheckpoints</div>
<div class="t fn" style="left:653px;top:276px;letter-spacing:-0.767px;">(2016_11_16 19_14_1...</div>
<div class="t dt" style="left:822px;top:276px;letter-spacing:-0.511px;">16.11.2016 19:26</div>
<div class="t dt" style="left:970px;top:276px;letter-spacing:-0.403px;">JSON-Datei</div>
<div class="t dt" style="left:1174px;top:276px;letter-spacing:-1.008px;">1 KB</div>
<svg class="a" style="left:500px;top:302px;" width="15" height="19" viewBox="0 0 15 19"><path d="M0.5 0.5h10l3.5 3.5v14.5h-13.5z" fill="#fbfbfb" stroke="#8c8c8c"/><path d="M10.5 0.5v3.5h3.5" fill="#f0f0f0" stroke="#8c8c8c"/></svg>
<div class="t fn" style="left:521px;top:303px;letter-spacing:-0.378px;">sessionCheckpoints</div>
<div class="t fn" style="left:653px;top:303px;letter-spacing:-0.767px;">(2016_11_27 13_36_0...</div>
<div class="t dt" style="left:822px;top:303px;letter-spacing:-0.511px;">27.11.2016 13:22</div>
<div class="t dt" style="left:970px;top:303px;letter-spacing:-0.403px;">JSON-Datei</div>
<div class="t dt" style="left:1174px;top:303px;letter-spacing:-1.008px;">1 KB</div>
<svg class="a" style="left:500px;top:329px;" width="15" height="19" viewBox="0 0 15 19"><path d="M0.5 0.5h10l3.5 3.5v14.5h-13.5z" fill="#fbfbfb" stroke="#8c8c8c"/><path d="M10.5 0.5v3.5h3.5" fill="#f0f0f0" stroke="#8c8c8c"/></svg>
<div class="t fn" style="left:521px;top:330px;letter-spacing:-0.378px;">sessionCheckpoints</div>
<div class="t fn" style="left:653px;top:330px;letter-spacing:-0.767px;">(2016_12_02 18_11_2...</div>
<div class="t dt" style="left:822px;top:330px;letter-spacing:-0.511px;">27.11.2016 19:26</div>
<div class="t dt" style="left:970px;top:330px;letter-spacing:-0.403px;">JSON-Datei</div>
<div class="t dt" style="left:1174px;top:330px;letter-spacing:-1.008px;">1 KB</div>
<svg class="a" style="left:500px;top:356px;" width="15" height="19" viewBox="0 0 15 19"><path d="M0.5 0.5h10l3.5 3.5v14.5h-13.5z" fill="#fbfbfb" stroke="#8c8c8c"/><path d="M10.5 0.5v3.5h3.5" fill="#f0f0f0" stroke="#8c8c8c"/></svg>
<div class="t fn" style="left:521px;top:357px;letter-spacing:-0.378px;">sessionCheckpoints</div>
<div class="t fn" style="left:653px;top:357px;letter-spacing:-0.817px;">(2016_12_03 16_00_3...</div>
<div class="t dt" style="left:822px;top:357px;letter-spacing:-0.580px;">02.12.2016 19:45</div>
<div class="t dt" style="left:970px;top:357px;letter-spacing:-0.403px;">JSON-Datei</div>
<div class="t dt" style="left:1174px;top:357px;letter-spacing:-1.008px;">1 KB</div>
<svg class="a" style="left:500px;top:383px;" width="15" height="19" viewBox="0 0 15 19"><path d="M0.5 0.5h10l3.5 3.5v14.5h-13.5z" fill="#fbfbfb" stroke="#8c8c8c"/><path d="M10.5 0.5v3.5h3.5" fill="#f0f0f0" stroke="#8c8c8c"/></svg>
<div class="t fn" style="left:521px;top:384px;letter-spacing:-0.378px;">sessionCheckpoints</div>
<div class="t fn" style="left:653px;top:384px;letter-spacing:-0.817px;">(2016_12_04 18_10_4...</div>
<div class="t dt" style="left:822px;top:384px;letter-spacing:-0.580px;">04.12.2016 19:07</div>
<div class="t dt" style="left:970px;top:384px;letter-spacing:-0.403px;">JSON-Datei</div>
<div class="t dt" style="left:1174px;top:384px;letter-spacing:-1.008px;">1 KB</div>
<svg class="a" style="left:500px;top:410px;" width="15" height="19" viewBox="0 0 15 19"><path d="M0.5 0.5h10l3.5 3.5v14.5h-13.5z" fill="#fbfbfb" stroke="#8c8c8c"/><path d="M10.5 0.5v3.5h3.5" fill="#f0f0f0" stroke="#8c8c8c"/></svg>
<div class="t fn" style="left:521px;top:411px;letter-spacing:-0.378px;">sessionCheckpoints</div>
<div class="t fn" style="left:653px;top:411px;letter-spacing:-0.817px;">(2016_12_07 17_21_5...</div>
<div class="t dt" style="left:822px;top:411px;letter-spacing:-0.580px;">04.12.2016 19:16</div>
<div class="t dt" style="left:970px;top:411px;letter-spacing:-0.403px;">JSON-Datei</div>
<div class="t dt" style="left:1174px;top:411px;letter-spacing:-1.008px;">1 KB</div>
<svg class="a" style="left:500px;top:437px;" width="15" height="19" viewBox="0 0 15 19"><path d="M0.5 0.5h10l3.5 3.5v14.5h-13.5z" fill="#fbfbfb" stroke="#8c8c8c"/><path d="M10.5 0.5v3.5h3.5" fill="#f0f0f0" stroke="#8c8c8c"/></svg>
<div class="t fn" style="left:521px;top:438px;letter-spacing:-0.378px;">sessionCheckpoints</div>
<div class="t fn" style="left:653px;top:438px;letter-spacing:-0.817px;">(2016_12_10 13_02_3...</div>
<div class="t dt" style="left:822px;top:438px;letter-spacing:-0.580px;">10.12.2016 13:45</div>
<div class="t dt" style="left:970px;top:438px;letter-spacing:-0.403px;">JSON-Datei</div>
<div class="t dt" style="left:1174px;top:438px;letter-spacing:-1.008px;">1 KB</div>
<svg class="a" style="left:500px;top:464px;" width="15" height="19" viewBox="0 0 15 19"><path d="M0.5 0.5h10l3.5 3.5v14.5h-13.5z" fill="#fbfbfb" stroke="#8c8c8c"/><path d="M10.5 0.5v3.5h3.5" fill="#f0f0f0" stroke="#8c8c8c"/></svg>
<div class="t fn" style="left:521px;top:465px;letter-spacing:-0.378px;">sessionCheckpoints</div>
<div class="t fn" style="left:653px;top:465px;letter-spacing:-0.767px;">(2016_12_11 15_26_2...</div>
<div class="t dt" style="left:822px;top:465px;letter-spacing:-0.580px;">10.12.2016 14:03</div>
<div class="t dt" style="left:970px;top:465px;letter-spacing:-0.403px;">JSON-Datei</div>
<div class="t dt" style="left:1174px;top:465px;letter-spacing:-1.008px;">1 KB</div>
<svg class="a" style="left:500px;top:491px;" width="15" height="19" viewBox="0 0 15 19"><path d="M0.5 0.5h10l3.5 3.5v14.5h-13.5z" fill="#fbfbfb" stroke="#8c8c8c"/><path d="M10.5 0.5v3.5h3.5" fill="#f0f0f0" stroke="#8c8c8c"/></svg>
<div class="t fn" style="left:521px;top:492px;letter-spacing:-0.378px;">sessionCheckpoints</div>
<div class="t fn" style="left:653px;top:492px;letter-spacing:-0.817px;">(2016_12_21 16_24_2...</div>
<div class="t dt" style="left:822px;top:492px;letter-spacing:-0.580px;">21.12.2016 17:15</div>
<div class="t dt" style="left:970px;top:492px;letter-spacing:-0.403px;">JSON-Datei</div>
<div class="t dt" style="left:1174px;top:492px;letter-spacing:-1.008px;">1 KB</div>
<svg class="a" style="left:500px;top:518px;" width="15" height="19" viewBox="0 0 15 19"><path d="M0.5 0.5h10l3.5 3.5v14.5h-13.5z" fill="#fbfbfb" stroke="#8c8c8c"/><path d="M10.5 0.5v3.5h3.5" fill="#f0f0f0" stroke="#8c8c8c"/></svg>
<div class="t fn" style="left:521px;top:519px;letter-spacing:-0.378px;">sessionCheckpoints</div>
<div class="t fn" style="left:653px;top:519px;letter-spacing:-0.817px;">(2016_12_23 22_21_1...</div>
<div class="t dt" style="left:822px;top:519px;letter-spacing:-0.580px;">23.12.2016 14:04</div>
<div class="t dt" style="left:970px;top:519px;letter-spacing:-0.403px;">JSON-Datei</div>
<div class="t dt" style="left:1174px;top:519px;letter-spacing:-1.008px;">1 KB</div>
<svg class="a" style="left:500px;top:545px;" width="15" height="19" viewBox="0 0 15 19"><path d="M0.5 0.5h10l3.5 3.5v14.5h-13.5z" fill="#fbfbfb" stroke="#8c8c8c"/><path d="M10.5 0.5v3.5h3.5" fill="#f0f0f0" stroke="#8c8c8c"/></svg>
<div class="t fn" style="left:521px;top:546px;letter-spacing:-0.378px;">sessionCheckpoints</div>
<div class="t fn" style="left:653px;top:546px;letter-spacing:-0.817px;">(2016_12_26 10_43_2...</div>
<div class="t dt" style="left:822px;top:546px;letter-spacing:-0.580px;">25.12.2016 17:31</div>
<div class="t dt" style="left:970px;top:546px;letter-spacing:-0.403px;">JSON-Datei</div>
<div class="t dt" style="left:1174px;top:546px;letter-spacing:-1.008px;">1 KB</div>
<svg class="a" style="left:500px;top:572px;" width="15" height="19" viewBox="0 0 15 19"><path d="M0.5 0.5h10l3.5 3.5v14.5h-13.5z" fill="#fbfbfb" stroke="#8c8c8c"/><path d="M10.5 0.5v3.5h3.5" fill="#f0f0f0" stroke="#8c8c8c"/></svg>
<div class="t fn" style="left:521px;top:573px;letter-spacing:-0.378px;">sessionCheckpoints</div>
<div class="t fn" style="left:653px;top:573px;letter-spacing:-0.817px;">(2016_12_27 17_01_0...</div>
<div class="t dt" style="left:822px;top:573px;letter-spacing:-0.580px;">26.12.2016 12:09</div>
<div class="t dt" style="left:970px;top:573px;letter-spacing:-0.403px;">JSON-Datei</div>
<div class="t dt" style="left:1174px;top:573px;letter-spacing:-1.008px;">1 KB</div>
<svg class="a" style="left:500px;top:599px;" width="15" height="19" viewBox="0 0 15 19"><path d="M0.5 0.5h10l3.5 3.5v14.5h-13.5z" fill="#fbfbfb" stroke="#8c8c8c"/><path d="M10.5 0.5v3.5h3.5" fill="#f0f0f0" stroke="#8c8c8c"/></svg>
<div class="t fn" style="left:521px;top:600px;letter-spacing:-0.378px;">sessionCheckpoints</div>
<div class="t fn" style="left:653px;top:600px;letter-spacing:-0.817px;">(2016_12_28 20_43_3...</div>
<div class="t dt" style="left:822px;top:600px;letter-spacing:-0.580px;">28.12.2016 20:49</div>
<div class="t dt" style="left:970px;top:600px;letter-spacing:-0.403px;">JSON-Datei</div>
<div class="t dt" style="left:1174px;top:600px;letter-spacing:-1.008px;">1 KB</div>
<svg class="a" style="left:500px;top:626px;" width="15" height="19" viewBox="0 0 15 19"><path d="M0.5 0.5h10l3.5 3.5v14.5h-13.5z" fill="#fbfbfb" stroke="#8c8c8c"/><path d="M10.5 0.5v3.5h3.5" fill="#f0f0f0" stroke="#8c8c8c"/></svg>
<div class="t fn" style="left:521px;top:627px;letter-spacing:-0.378px;">sessionCheckpoints</div>
<div class="t fn" style="left:653px;top:627px;letter-spacing:-0.817px;">(2016_12_31 18_29_3...</div>
<div class="t dt" style="left:822px;top:627px;letter-spacing:-0.580px;">31.12.2016 18:40</div>
<div class="t dt" style="left:970px;top:627px;letter-spacing:-0.403px;">JSON-Datei</div>
<div class="t dt" style="left:1174px;top:627px;letter-spacing:-1.008px;">1 KB</div>
<svg class="a" style="left:500px;top:653px;" width="15" height="19" viewBox="0 0 15 19"><path d="M0.5 0.5h10l3.5 3.5v14.5h-13.5z" fill="#fbfbfb" stroke="#8c8c8c"/><path d="M10.5 0.5v3.5h3.5" fill="#f0f0f0" stroke="#8c8c8c"/></svg>
<div class="t fn" style="left:521px;top:654px;letter-spacing:-0.378px;">sessionCheckpoints</div>
<div class="t fn" style="left:653px;top:654px;letter-spacing:-0.817px;">(2016_12_31 20_29_5...</div>
<div class="t dt" style="left:822px;top:654px;letter-spacing:-0.580px;">31.12.2016 21:13</div>
<div class="t dt" style="left:970px;top:654px;letter-spacing:-0.403px;">JSON-Datei</div>
<div class="t dt" style="left:1174px;top:654px;letter-spacing:-1.008px;">1 KB</div>
<svg class="a" style="left:500px;top:680px;" width="15" height="19" viewBox="0 0 15 19"><path d="M0.5 0.5h10l3.5 3.5v14.5h-13.5z" fill="#fbfbfb" stroke="#8c8c8c"/><path d="M10.5 0.5v3.5h3.5" fill="#f0f0f0" stroke="#8c8c8c"/></svg>
<div class="t fn" style="left:521px;top:681px;letter-spacing:-0.378px;">sessionCheckpoints</div>
<div class="t fn" style="left:653px;top:681px;letter-spacing:-0.817px;">(2016_12_31 21_30_0...</div>
<div class="t dt" style="left:822px;top:681px;letter-spacing:-0.580px;">31.12.2016 22:08</div>
<div class="t dt" style="left:970px;top:681px;letter-spacing:-0.403px;">JSON-Datei</div>
<div class="t dt" style="left:1174px;top:681px;letter-spacing:-1.008px;">1 KB</div>
<svg class="a" style="left:500px;top:707px;" width="15" height="19" viewBox="0 0 15 19"><path d="M0.5 0.5h10l3.5 3.5v14.5h-13.5z" fill="#fbfbfb" stroke="#8c8c8c"/><path d="M10.5 0.5v3.5h3.5" fill="#f0f0f0" stroke="#8c8c8c"/></svg>
<div class="t fn" style="left:521px;top:708px;letter-spacing:-0.378px;">sessionCheckpoints</div>
<div class="t fn" style="left:653px;top:708px;letter-spacing:-0.817px;">(2016_12_31 23_30_2...</div>
<div class="t dt" style="left:822px;top:708px;letter-spacing:-0.580px;">01.01.2017 00:03</div>
<div class="t dt" style="left:970px;top:708px;letter-spacing:-0.403px;">JSON-Datei</div>
<div class="t dt" style="left:1174px;top:708px;letter-spacing:-1.008px;">1 KB</div>
<svg class="a" style="left:500px;top:734px;" width="15" height="19" viewBox="0 0 15 19"><path d="M0.5 0.5h10l3.5 3.5v14.5h-13.5z" fill="#fbfbfb" stroke="#8c8c8c"/><path d="M10.5 0.5v3.5h3.5" fill="#f0f0f0" stroke="#8c8c8c"/></svg>
<div class="t fn" style="left:521px;top:735px;letter-spacing:-0.378px;">sessionCheckpoints</div>
<div class="t fn" style="left:653px;top:735px;letter-spacing:-0.817px;">(2017_01_01 10_43_3...</div>
<div class="t dt" style="left:822px;top:735px;letter-spacing:-0.580px;">01.01.2017 10:37</div>
<div class="t dt" style="left:970px;top:735px;letter-spacing:-0.403px;">JSON-Datei</div>
<div class="t dt" style="left:1174px;top:735px;letter-spacing:-1.008px;">1 KB</div>
<svg class="a" style="left:500px;top:761px;" width="15" height="19" viewBox="0 0 15 19"><path d="M0.5 0.5h10l3.5 3.5v14.5h-13.5z" fill="#fbfbfb" stroke="#8c8c8c"/><path d="M10.5 0.5v3.5h3.5" fill="#f0f0f0" stroke="#8c8c8c"/></svg>
<div class="t fn" style="left:521px;top:762px;letter-spacing:-0.378px;">sessionCheckpoints</div>
<div class="t fn" style="left:653px;top:762px;letter-spacing:-0.817px;">(2017_01_01 18_05_2...</div>
<div class="t dt" style="left:822px;top:762px;letter-spacing:-0.580px;">01.01.2017 19:04</div>
<div class="t dt" style="left:970px;top:762px;letter-spacing:-0.403px;">JSON-Datei</div>
<div class="t dt" style="left:1174px;top:762px;letter-spacing:-1.008px;">1 KB</div>
<svg class="a" style="left:500px;top:788px;" width="15" height="19" viewBox="0 0 15 19"><path d="M0.5 0.5h10l3.5 3.5v14.5h-13.5z" fill="#fbfbfb" stroke="#8c8c8c"/><path d="M10.5 0.5v3.5h3.5" fill="#f0f0f0" stroke="#8c8c8c"/></svg>
<div class="t fn" style="left:521px;top:789px;letter-spacing:-0.378px;">sessionCheckpoints</div>
<div class="t fn" style="left:653px;top:789px;letter-spacing:-0.767px;">(2017_01_02 11_32_5...</div>
<div class="t dt" style="left:822px;top:789px;letter-spacing:-0.511px;">02.01.2017 11:41</div>
<div class="t dt" style="left:970px;top:789px;letter-spacing:-0.403px;">JSON-Datei</div>
<div class="t dt" style="left:1174px;top:789px;letter-spacing:-1.008px;">1 KB</div>
<div class="a" style="left:492px;top:812px;width:717px;height:27px;background:#e5f3ff"></div>
<svg class="a" style="left:500px;top:815px;" width="15" height="19" viewBox="0 0 15 19"><path d="M0.5 0.5h10l3.5 3.5v14.5h-13.5z" fill="#fbfbfb" stroke="#8c8c8c"/><path d="M10.5 0.5v3.5h3.5" fill="#f0f0f0" stroke="#8c8c8c"/></svg>
<div class="t fn" style="left:521px;top:816px;letter-spacing:-0.378px;">sessionCheckpoints</div>
<div class="t fn" style="left:653px;top:816px;letter-spacing:-0.817px;">(2017_01_02 20_31_3...</div>
<div class="t dt" style="left:822px;top:816px;letter-spacing:-0.580px;">02.01.2017 21:25</div>
<div class="t dt" style="left:970px;top:816px;letter-spacing:-0.403px;">JSON-Datei</div>
<div class="t dt" style="left:1174px;top:816px;letter-spacing:-1.008px;">1 KB</div>
<svg class="a" style="left:500px;top:842px;" width="15" height="19" viewBox="0 0 15 19"><path d="M0.5 0.5h10l3.5 3.5v14.5h-13.5z" fill="#fbfbfb" stroke="#8c8c8c"/><path d="M10.5 0.5v3.5h3.5" fill="#f0f0f0" stroke="#8c8c8c"/></svg>
<div class="t fn" style="left:521px;top:843px;letter-spacing:-0.378px;">sessionCheckpoints</div>
<div class="t fn" style="left:653px;top:843px;letter-spacing:-0.817px;">(2017_01_03 12_29_5...</div>
<div class="t dt" style="left:1174px;top:843px;letter-spacing:-1.008px;">1 KB</div>
<svg class="a" style="left:500px;top:869px;" width="15" height="19" viewBox="0 0 15 19"><path d="M0.5 0.5h10l3.5 3.5v14.5h-13.5z" fill="#fbfbfb" stroke="#8c8c8c"/><path d="M10.5 0.5v3.5h3.5" fill="#f0f0f0" stroke="#8c8c8c"/></svg>
<div class="t fn" style="left:521px;top:870px;letter-spacing:-0.378px;">sessionCheckpoints</div>
<div class="t fn" style="left:653px;top:870px;letter-spacing:-0.767px;">(2017_01_04 11_15_4...</div>
<div class="t dt" style="left:1174px;top:870px;letter-spacing:-1.008px;">1 KB</div>
<svg class="a" style="left:500px;top:896px;" width="15" height="19" viewBox="0 0 15 19"><path d="M0.5 0.5h10l3.5 3.5v14.5h-13.5z" fill="#fbfbfb" stroke="#8c8c8c"/><path d="M10.5 0.5v3.5h3.5" fill="#f0f0f0" stroke="#8c8c8c"/></svg>
<div class="t fn" style="left:521px;top:897px;letter-spacing:-0.378px;">sessionCheckpoints</div>
<div class="t fn" style="left:653px;top:897px;letter-spacing:-0.817px;">(2017_01_04 12_15_5...</div>
<div class="t dt" style="left:1174px;top:897px;letter-spacing:-1.008px;">1 KB</div>
<svg class="a" style="left:500px;top:923px;" width="15" height="19" viewBox="0 0 15 19"><path d="M0.5 0.5h10l3.5 3.5v14.5h-13.5z" fill="#fbfbfb" stroke="#8c8c8c"/><path d="M10.5 0.5v3.5h3.5" fill="#f0f0f0" stroke="#8c8c8c"/></svg>
<div class="t fn" style="left:521px;top:924px;letter-spacing:-0.378px;">sessionCheckpoints</div>
<div class="t fn" style="left:653px;top:924px;letter-spacing:-0.767px;">(2017_01_04 17_11_2...</div>
<div class="t dt" style="left:822px;top:924px;letter-spacing:-0.580px;">04.01.2017 13:24</div>
<div class="t dt" style="left:970px;top:924px;letter-spacing:-0.403px;">JSON-Datei</div>
<div class="t dt" style="left:1174px;top:924px;letter-spacing:-1.008px;">1 KB</div>
<svg class="a" style="left:500px;top:950px;" width="15" height="19" viewBox="0 0 15 19"><path d="M0.5 0.5h10l3.5 3.5v14.5h-13.5z" fill="#fbfbfb" stroke="#8c8c8c"/><path d="M10.5 0.5v3.5h3.5" fill="#f0f0f0" stroke="#8c8c8c"/></svg>
<div class="t fn" style="left:521px;top:951px;letter-spacing:-0.378px;">sessionCheckpoints</div>
<div class="t fn" style="left:653px;top:951px;letter-spacing:-0.817px;">(2017_01_04 20_03_3...</div>
<div class="t dt" style="left:822px;top:951px;letter-spacing:-0.580px;">04.01.2017 19:39</div>
<div class="t dt" style="left:970px;top:951px;letter-spacing:-0.403px;">JSON-Datei</div>
<div class="t dt" style="left:1174px;top:951px;letter-spacing:-1.008px;">1 KB</div>
<svg class="a" style="left:500px;top:977px;" width="15" height="19" viewBox="0 0 15 19"><path d="M0.5 0.5h10l3.5 3.5v14.5h-13.5z" fill="#fbfbfb" stroke="#8c8c8c"/><path d="M10.5 0.5v3.5h3.5" fill="#f0f0f0" stroke="#8c8c8c"/></svg>
<div class="t fn" style="left:521px;top:978px;letter-spacing:-0.378px;">sessionCheckpoints</div>
<div class="t fn" style="left:653px;top:978px;letter-spacing:-0.817px;">(2017_01_05 10_33_1...</div>
<div class="t dt" style="left:822px;top:978px;letter-spacing:-0.580px;">05.01.2017 09:54</div>
<div class="t dt" style="left:970px;top:978px;letter-spacing:-0.403px;">JSON-Datei</div>
<div class="t dt" style="left:1174px;top:978px;letter-spacing:-1.008px;">1 KB</div>
<div class="a" style="left:472px;top:218px;width:1428px;height:32px;background:#fff"></div>
<svg class="a" style="left:644px;top:218px;" width="12" height="7" viewBox="0 0 12 7"><path d="M1 6 L6 1 L11 6" fill="none" stroke="#a0a0a0" stroke-width="1"/></svg>
<div class="t hd" style="left:494px;top:225px;letter-spacing:normal;">Name</div>
<div class="t hd" style="left:820px;top:225px;letter-spacing:-0.089px;">Änderungsdatum</div>
<div class="t hd" style="left:970px;top:225px;letter-spacing:-0.529px;">Typ</div>
<div class="t hd" style="left:1120px;top:225px;letter-spacing:-0.663px;">Größe</div>
<div class="a" style="left:813px;top:218px;width:1px;height:32px;background:#e5e5e5"></div>
<div class="a" style="left:963px;top:218px;width:1px;height:32px;background:#e5e5e5"></div>
<div class="a" style="left:1113px;top:218px;width:1px;height:32px;background:#e5e5e5"></div>
<div class="a" style="left:1212px;top:218px;width:1px;height:32px;background:#e5e5e5"></div>
<div class="a" style="left:811px;top:830px;width:354px;height:85px;background:#fff;border:1px solid #767676;box-sizing:border-box;box-shadow:2px 2px 3px rgba(0,0,0,0.3)"></div>
<div class="t tt" style="left:817px;top:833px;letter-spacing:-0.571px;">sessionCheckpoints (2017_01_02 20_31_33 UTC).json</div>
<div class="t tt" style="left:817px;top:853px;letter-spacing:-0.435px;">Typ: JSON-Datei</div>
<div class="t tt" style="left:817px;top:873px;letter-spacing:-0.510px;">Größe: 204 Bytes</div>
<div class="t tt" style="left:817px;top:893px;letter-spacing:-0.324px;">Änderungsdatum: 02.01.2017 21:25</div>
<div class="a" style="left:1900px;top:218px;width:20px;height:783px;background:#f0f0f0"></div>
<div class="a" style="left:1900px;top:803px;width:19px;height:21px;background:#cdcdcd"></div>
<svg class="a" style="left:1904px;top:225px;" width="11" height="7" viewBox="0 0 11 7"><path d="M1 6 L5.5 1.5 L10 6" fill="none" stroke="#606060" stroke-width="1.6"/></svg>
<svg class="a" style="left:1904px;top:986px;" width="11" height="7" viewBox="0 0 11 7"><path d="M1 1 L5.5 5.5 L10 1" fill="none" stroke="#606060" stroke-width="1.6"/></svg>
<div class="a" style="left:0px;top:1003px;width:1920px;height:27px;background:#fff"></div>
<div class="a" style="left:0px;top:1001px;width:1900px;height:2px;background:#fff"></div>
<div class="t st" style="left:16px;top:1006px;letter-spacing:-0.291px;">2 275 Elemente</div>
<div class="a" style="left:131px;top:1009px;width:1px;height:13px;background:#f0f0f0"></div>
<div class="t st" style="left:144px;top:1006px;letter-spacing:-0.246px;">1 Element ausgewählt (204 Bytes)</div>
<div class="a" style="left:378px;top:1009px;width:1px;height:13px;background:#f0f0f0"></div>
<div class="a" style="left:1859px;top:1001px;width:28px;height:29px;background:#cce8f6;border:1px solid #26a0da;box-sizing:border-box"></div>
<svg class="a" style="left:1864px;top:1008px;" width="18" height="16" viewBox="0 0 18 16"><rect x="0.5" y="0.5" width="5" height="15" fill="#fff" stroke="#8a8a8a"/><rect x="1.5" y="2" width="3" height="2.5" fill="#3a8a5a"/><rect x="1.5" y="7" width="3" height="2.5" fill="#e0a030"/><rect x="1.5" y="12" width="3" height="2.5" fill="#d03030"/><g stroke="#777" stroke-width="1.2"><path d="M7 3h4M13 3h4M7 8h4M13 8h4M7 13h4M13 13h4"/></g></svg>
<svg class="a" style="left:1892px;top:1008px;" width="18" height="14" viewBox="0 0 18 14"><rect x="0.5" y="0.5" width="17" height="13" fill="#fff" stroke="#8a8a8a"/><rect x="2" y="2" width="14" height="10" fill="#6aa8e8"/><path d="M2 8 Q7 5 16 9 V12 H2z" fill="#3d6a4a"/></svg>
<div class="a" style="left:0px;top:1030px;width:1920px;height:50px;background:linear-gradient(90deg,#0e0610 0%,#0f0610 35%,#0e050a 60%,#130306 100%)"></div>
<div class="a" style="left:509px;top:1030px;width:200px;height:50px;background:#3d343c"></div>
<div class="a" style="left:251px;top:1077px;width:190px;height:3px;background:#76b9ed"></div>
<div class="a" style="left:509px;top:1077px;width:200px;height:3px;background:#76b9ed"></div>
<div class="a" style="left:714px;top:1077px;width:190px;height:3px;background:#76b9ed"></div>
<svg class="a" style="left:20px;top:1045px;" width="21" height="21" viewBox="0 0 21 21"><path d="M0 3 L9 1.7 V10 H0z M10 1.5 L21 0 V10 H10z M0 11 H9 V19.3 L0 18z M10 11 H21 V21 L10 19.5z" fill="#fff"/></svg>
<svg class="a" style="left:79px;top:1044px;" width="22" height="22" viewBox="0 0 22 22"><circle cx="13" cy="8.5" r="7" fill="none" stroke="#fff" stroke-width="1.4"/><path d="M8 13.5 L1 21" stroke="#fff" stroke-width="1.6"/></svg>
<svg class="a" style="left:137px;top:1045px;" width="26" height="19" viewBox="0 0 26 19"><rect x="4.5" y="0.5" width="17" height="18" fill="none" stroke="#fff" stroke-width="1.3"/><path d="M3 3 H1 V16 H3 M23 3 H25 V16 H23" fill="none" stroke="#fff" stroke-width="1.2"/></svg>
<svg class="a" style="left:201px;top:1042px;" width="26" height="28" viewBox="0 0 26 28"><path d="M0.5 12.5 C2.5 4.5 8.5 0.5 14 0.5 C21.5 0.5 25.5 6 25.5 12.5 V17 H9.5 C9.8 21 13 23.5 17.5 23.5 C20.5 23.5 22.5 22.8 24.5 21.5 V26 C22 27.2 19.5 27.5 16.5 27.5 C8.5 27.5 3 22 3 15.5 C3 10.5 6 6.5 10 5.2 C6 5.8 2.5 8.5 0.5 12.5 Z M9.5 11.5 H19.5 C19.5 8 17.5 5.8 14.5 5.8 C11.5 5.8 9.5 8.5 9.5 11.5 Z" fill="#0f7ddb" fill-rule="evenodd"/></svg>
<svg class="a" style="left:259px;top:1039px;" width="30" height="31" viewBox="0 0 30 31"><defs><linearGradient id="ieg" x1="0" y1="0" x2="1" y2="1"><stop offset="0" stop-color="#8fe3fb"/><stop offset="1" stop-color="#1f9ee0"/></linearGradient></defs><path d="M4 16 C4 9 9 4.5 15.5 4.5 C22 4.5 26.5 9 26.5 15.5 V18 H10.5 C10.8 21.5 13 23.5 16.5 23.5 C19 23.5 21 22.5 22.5 20.5 H26.5 C25 25.5 21 29 16 29 C9 29 4 23.5 4 16 Z M10.5 13 H20.5 C20.3 10.5 18.5 8.8 15.5 8.8 C12.8 8.8 11 10.5 10.5 13 Z" fill="url(#ieg)" fill-rule="evenodd"/><path d="M7 27.5 C1 31 -0.5 25 5 17.5 C10 10 20 3.5 25.5 2 C29.5 1 30 3.5 28 6.5" fill="none" stroke="#f2c010" stroke-width="2.2"/></svg>
<div class="t tb" style="left:292px;top:1046px;letter-spacing:-0.404px;">PC kaputt - neuer L...</div>
<svg class="a" style="left:462px;top:1039px;" width="30" height="31" viewBox="0 0 30 31"><path d="M9 2 C16 0 26 3 28.5 12 C30.5 20 25 28 17 30 C21 26 24 20 22.5 14 C21 8 15 6 11 8 C8 9.5 6 12 5.5 15 C4 20 6 25 10 27 C4 26 0.5 20 1 14 C1.5 8 4.5 4 9 2 Z" fill="#1f63c0"/><path d="M9 2 C15 1 22 3 25 8 C20 5 14 5 11 8 C9 6.5 8.5 4 9 2z" fill="#4aa2e8"/><path d="M3 12.5 L20 14.5 L19.5 26.5 L3 22 Z" fill="#eeebe6"/><path d="M3 12.5 L11 18 L20 14.5" fill="none" stroke="#9a948c" stroke-width="0.8"/><path d="M7 6 C10 3.5 14 4 16 6.5 C13 7 10 9 9 12 L6 11 Z" fill="#2f7fd5"/></svg>
<svg class="a" style="left:526px;top:1043px;" width="19" height="26" viewBox="0 0 19 26"><defs><linearGradient id="tf" x1="0" x2="1"><stop offset="0" stop-color="#f2c14c"/><stop offset="1" stop-color="#fde394"/></linearGradient></defs><path d="M2 1 H18 V17 L19 18 V22 H6 V25 L0.5 23 V1.5 Z" fill="url(#tf)"/><path d="M0.5 1 L6 3 V25 L0.5 23 Z" fill="#fde9a6"/></svg>
<div class="t tb" style="left:555px;top:1046px;letter-spacing:normal;">kxut94o7.default</div>
<svg class="a" style="left:726px;top:1043px;" width="19" height="26" viewBox="0 0 19 26"><defs><linearGradient id="tf" x1="0" x2="1"><stop offset="0" stop-color="#f2c14c"/><stop offset="1" stop-color="#fde394"/></linearGradient></defs><path d="M2 1 H18 V17 L19 18 V22 H6 V25 L0.5 23 V1.5 Z" fill="url(#tf)"/><path d="M0.5 1 L6 3 V25 L0.5 23 Z" fill="#fde9a6"/></svg>
<div class="t tb" style="left:754px;top:1046px;letter-spacing:-0.490px;">Screenshots</div>
<svg class="a" style="left:925px;top:1040px;" width="30" height="30" viewBox="0 0 30 30"><rect x="0" y="0" width="30" height="30" rx="4" fill="#fff"/><path d="M5 12h20v4H5z M7 17h16v10H7z" fill="#c00"/><rect x="14" y="12" width="2" height="15" fill="#fff"/><path d="M15 11 C11 4 7 6 8 9 C9 11 13 11 15 11 C17 11 21 11 22 9 C23 6 19 4 15 11z" fill="none" stroke="#c00" stroke-width="1.6"/></svg>
<svg class="a" style="left:988px;top:1039px;" width="28" height="32" viewBox="0 0 28 32"><path d="M1 10 L27 6 V30 L1 27 Z" fill="#fff"/><path d="M8 9 C8 2 12 1 14 1 C17 1 20 3 20 8" fill="none" stroke="#fff" stroke-width="1.3"/><path d="M11 8 C11 4 13 3 14.5 3 C16 3 18 5 18 8" fill="none" stroke="#fff" stroke-width="1"/><path d="M4 13 L10 12.3 V17.5 H4z M11 12.2 L17 11.5 V17.5 H11z M4 18.5 H10 V23.5 L4 23z M11 18.5 H17 V24 L11 23.6z" fill="#150a12"/></svg>
<svg class="a" style="left:1053px;top:1040px;" width="23" height="31" viewBox="0 0 23 31"><rect x="0" y="0" width="23" height="31" fill="#fff"/><rect x="2.5" y="2.5" width="18" height="5" fill="#150a12"/><g fill="#150a12"><path d="M3 11h4l-4 4z M9.5 11h4l-4 4z M16 11h4l-4 4z M3 18h4l-4 4z M9.5 18h4l-4 4z M16 18h4l-4 4z M3 25h4l-4 4z M9.5 25h4l-4 4z M16 25h4l-4 4z"/></g></svg>
<svg class="a" style="left:1609px;top:1050px;" width="18" height="10" viewBox="0 0 18 10"><path d="M1 9 L9 1 L17 9" fill="none" stroke="#fff" stroke-width="1.2"/></svg>
<svg class="a" style="left:1637px;top:1048px;" width="22" height="14" viewBox="0 0 22 14"><rect x="4.5" y="3.5" width="16" height="9" fill="none" stroke="#fff" stroke-width="1.1"/><rect x="5.5" y="4.5" width="14" height="7" fill="#fff"/><rect x="20.5" y="6" width="1.5" height="4" fill="#fff"/><path d="M1 1V4M3 1V4M0 4h4v3h-2v6" fill="none" stroke="#fff" stroke-width="0.9"/></svg>
<svg class="a" style="left:1670px;top:1047px;" width="17" height="16" viewBox="0 0 17 16"><g fill="none" stroke="#fff" stroke-width="1"><path d="M1 15 A14 14 0 0 1 15 1"/><path d="M4 15 A11 11 0 0 1 15 4"/><path d="M7 15 A8 8 0 0 1 15 7"/><path d="M10 15 A5 5 0 0 1 15 10"/></g><circle cx="14" cy="14" r="1.5" fill="#fff"/></svg>
<svg class="a" style="left:1697px;top:1046px;" width="22" height="18" viewBox="0 0 22 18"><path d="M1 6 H5 L10 1.5 V16.5 L5 12 H1 Z" fill="none" stroke="#fff" stroke-width="1.1"/><path d="M13 6 Q15 9 13 12 M16 3.5 Q19.5 9 16 14.5" fill="none" stroke="#fff" stroke-width="1.1"/><path d="M19 1 Q24 9 19 17" fill="none" stroke="#777" stroke-width="1"/></svg>
<div class="t tb" style="left:1730px;top:1046px;letter-spacing:-1.357px;">DEU</div>
<div class="t tb" style="left:1761px;top:1034px;width:100px;text-align:center;letter-spacing:-0.509px;">21:18</div>
<div class="t tb" style="left:1761px;top:1057px;width:100px;text-align:center;letter-spacing:-0.608px;">04.03.2017</div>
<svg class="a" style="left:1868px;top:1044px;" width="22" height="18" viewBox="0 0 22 18"><path d="M0.5 0.5 H20.5 V14 H8 L4 18 V14 H0.5 Z" fill="#fff"/><g stroke="#150a12" stroke-width="1.2"><path d="M4 4.5h13M4 7.5h13M4 10.5h13"/></g></svg>
<svg class="a" style="left:1877px;top:1053px;" width="22" height="22" viewBox="0 0 22 22"><circle cx="11" cy="11" r="10" fill="#2d2d2d" stroke="#555"/><text x="11" y="16" text-anchor="middle" font-family="Liberation Sans" font-weight="bold" font-size="14" fill="#fff">2</text></svg>
<div class="a" style="left:1914px;top:1030px;width:1px;height:50px;background:#555"></div>
</body></html>
